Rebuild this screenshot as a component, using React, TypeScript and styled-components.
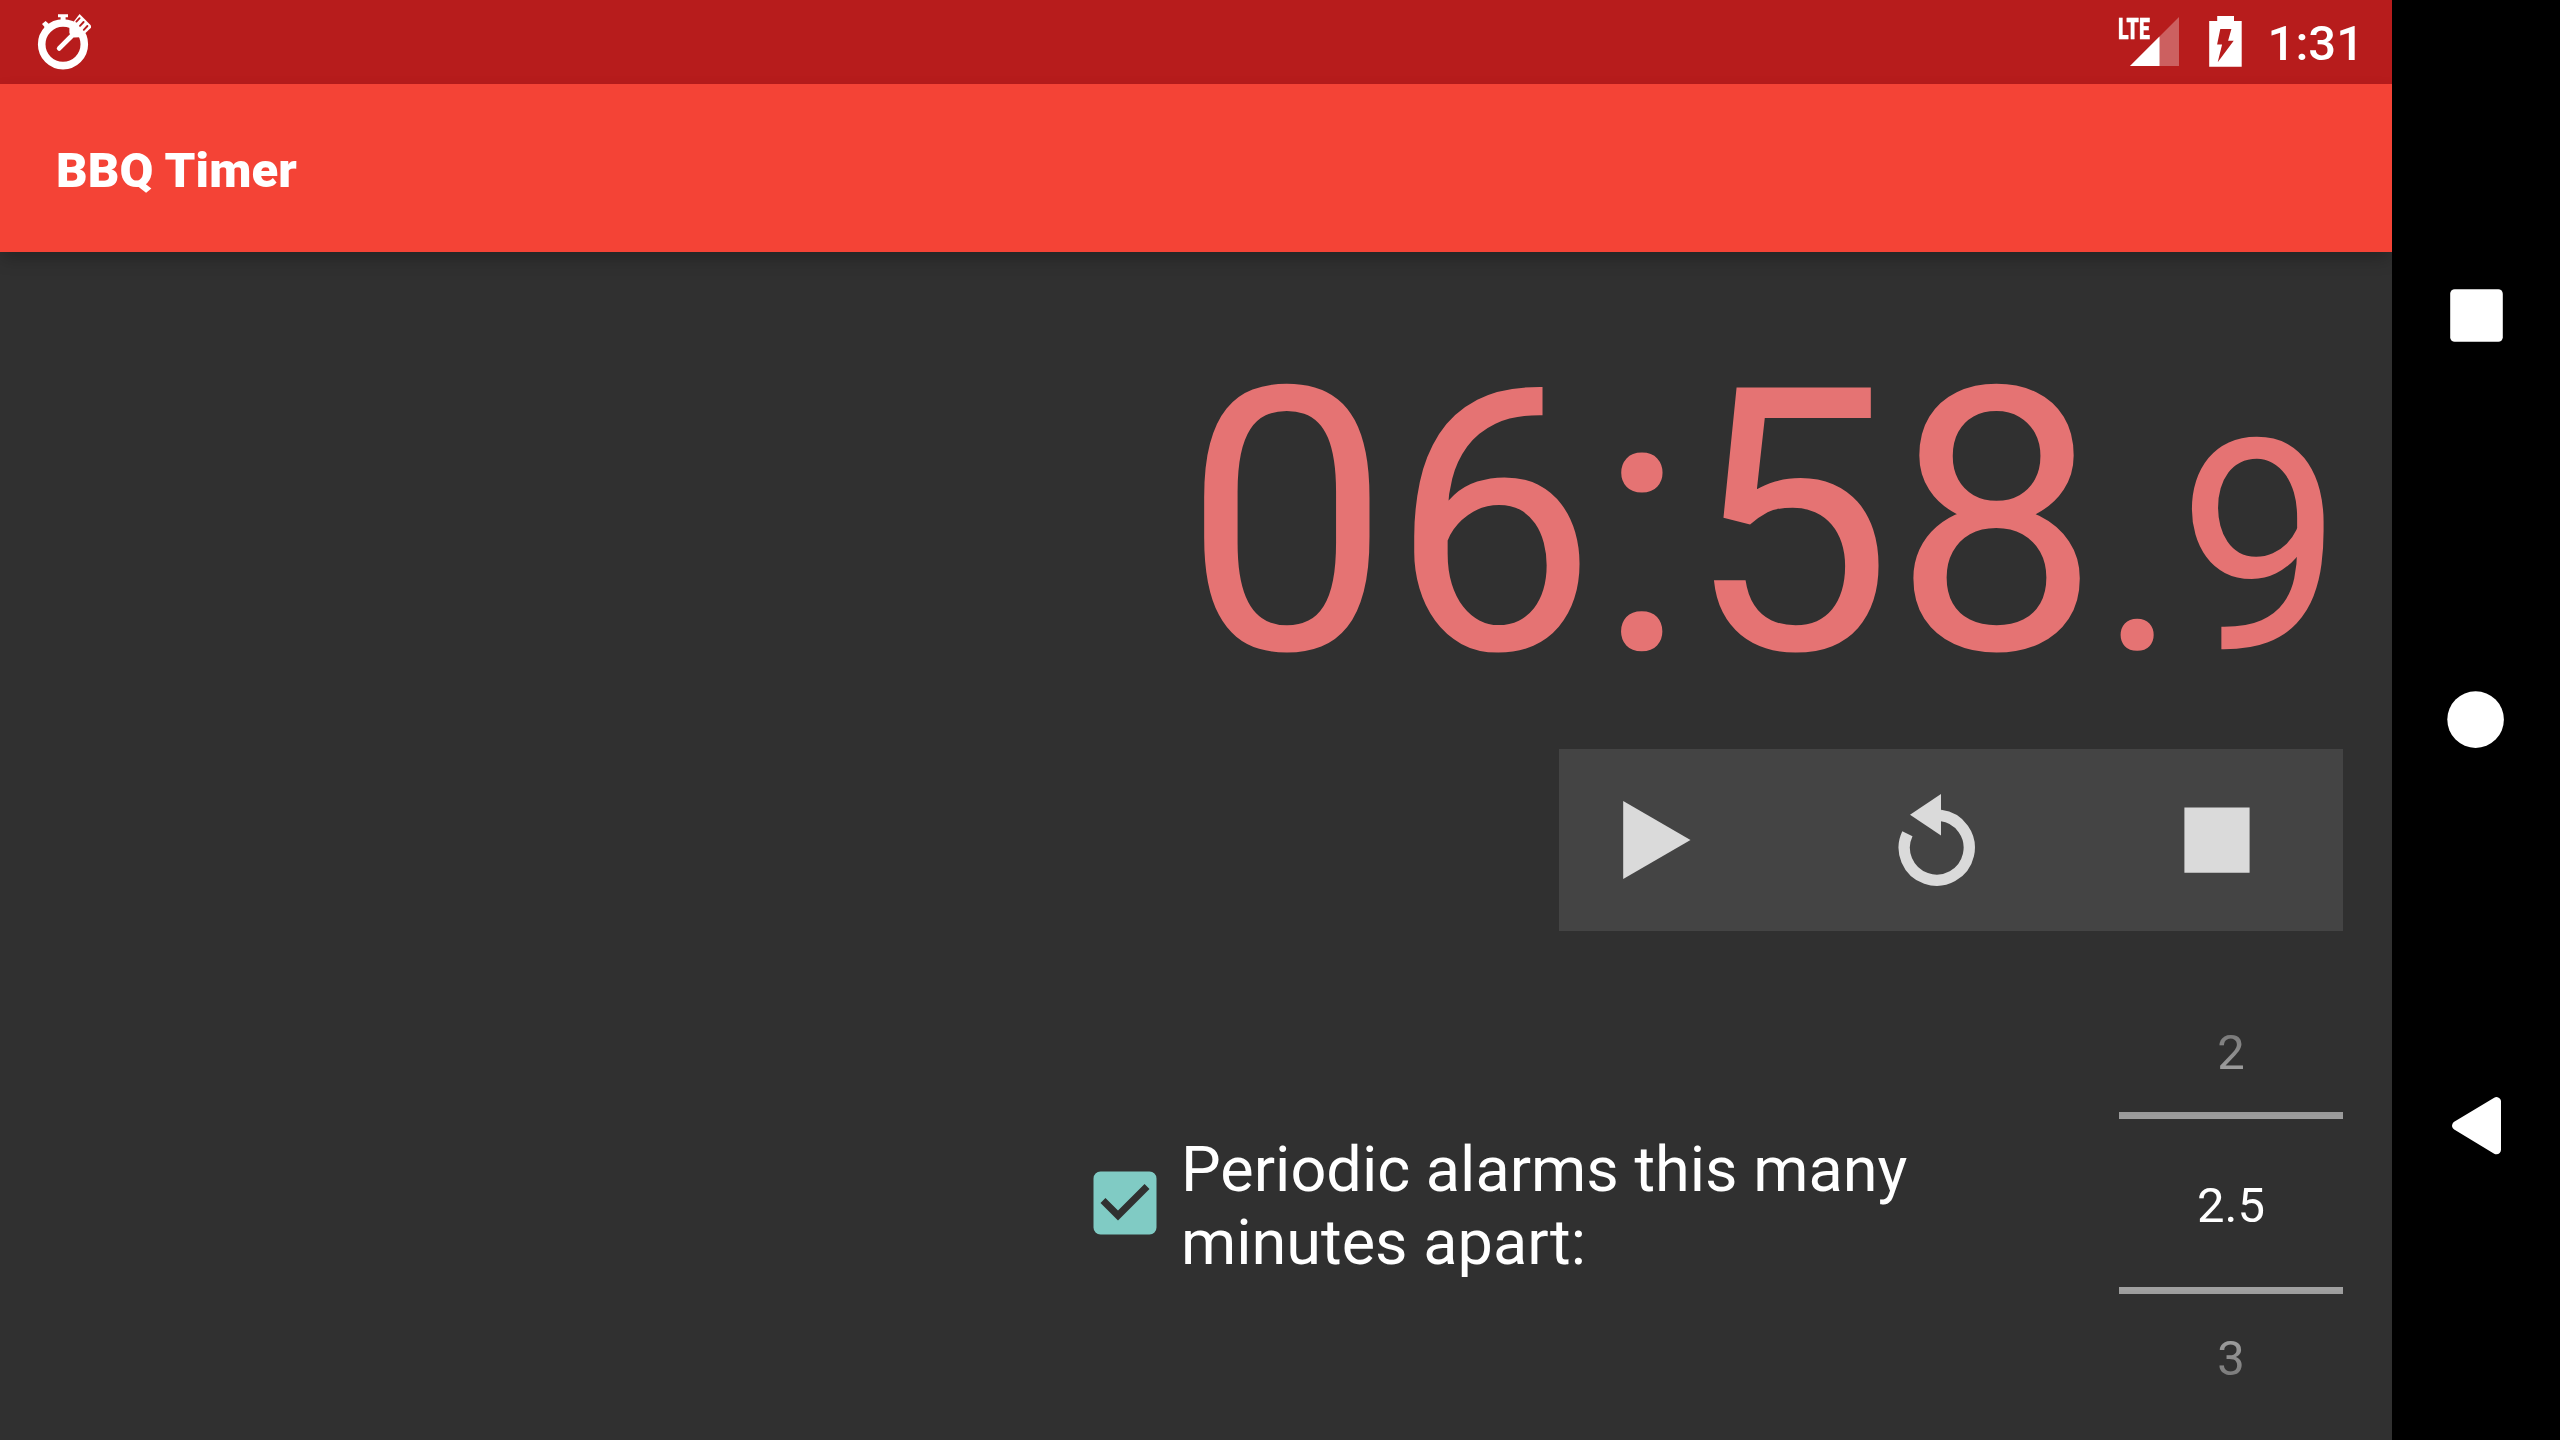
import React from "react";
import styled, { createGlobalStyle } from "styled-components";

const GlobalStyle = createGlobalStyle`
  *, *::before, *::after { box-sizing: border-box; }
  body { margin: 0; background: #000; }
`;

const Device = styled.div`
  display: grid;
  grid-template-columns: 2392px 168px;
  width: 2560px;
  height: 1440px;
  overflow: hidden;
  background: #000;
  font-family: Roboto, "Noto Sans", sans-serif;
  color: #fff;
`;

const AppWindow = styled.div`
  display: flex;
  flex-direction: column;
  height: 1440px;
  overflow: hidden;
  background: #303030;
`;

const StatusBar = styled.header`
  display: flex;
  justify-content: space-between;
  flex: 0 0 84px;
  height: 84px;
  padding: 0 28px 0 35px;
  background: #b71c1c;
`;

const StatusIcons = styled.div`
  display: flex;
  align-items: flex-start;
`;

const StatusGlyph = styled.svg<{ $width: number; $gap?: number }>`
  display: block;
  flex: none;
  width: ${(p) => p.$width}px;
  height: 84px;
  margin-right: ${(p) => p.$gap ?? 0}px;
`;

const NetworkType = styled.span`
  width: 12px;
  padding-top: 12px;
  font-size: 29.5px;
  line-height: 35px;
  font-weight: 900;
  white-space: nowrap;
  -webkit-text-stroke: 0.4px currentColor;
  transform: scaleX(0.66);
  transform-origin: 0 0;
`;

const StatusClock = styled.span`
  padding-top: 4px;
  font-size: 49px;
  line-height: 80px;
  font-weight: 500;
`;

const Toolbar = styled.div`
  display: flex;
  align-items: center;
  flex: 0 0 168px;
  padding: 4px 56px 0;
  background: #f44336;
  box-shadow: 0 8px 16px -2px rgba(0, 0, 0, 0.25);
`;

const Title = styled.h1`
  margin: 0;
  font-size: 49px;
  line-height: 57px;
  font-weight: 900;
  letter-spacing: 0.15px;
`;

const Content = styled.main`
  display: flex;
  flex-direction: column;
  align-items: flex-end;
  padding: 56px 49px 0 0;
`;

const Elapsed = styled.div`
  font-size: 368px;
  line-height: 431px;
  height: 431px;
  color: #e57373;
  white-space: nowrap;
`;

const Tenths = styled.span`
  font-size: 0.8em;
  line-height: 1;
`;

const Controls = styled.div`
  display: flex;
  align-items: center;
  justify-content: space-between;
  width: 784px;
  height: 182px;
  margin-top: 10px;
  padding: 0 78px 0 50px;
  background: #444;
`;

const ControlButton = styled.button`
  width: 96px;
  height: 96px;
  padding: 0;
  border: 0;
  background: none;
  color: #dadada;
`;

const Drawing = styled.svg`
  display: block;
  width: 100%;
  height: 100%;
`;

const Settings = styled.section`
  display: flex;
  align-items: center;
  width: 1260px;
  height: 459px;
  margin-top: 45px;
`;

const Checkbox = styled.button`
  flex: none;
  width: 84px;
  height: 84px;
  margin: 0 14px 5px 0;
  padding: 0;
  border: 0;
  background: none;
  color: #80cbc4;
`;

const Label = styled.label`
  flex: 1;
  padding: 1px 49px 0 0;
  font-size: 63px;
  line-height: 73px;
`;

const Picker = styled.div`
  display: grid;
  grid-template-rows: 136px 7px 168px 7px 141px;
  width: 224px;
  height: 459px;
  mask-image: linear-gradient(to bottom, transparent -18px, #000 195px, #000 264px, transparent 477px);
`;

const PickerDivider = styled.div`
  background: rgba(255, 255, 255, 0.7);
`;

const PickerValue = styled.div<{ $top?: number; $bottom?: number }>`
  display: flex;
  align-items: center;
  justify-content: center;
  padding-top: ${(p) => p.$top ?? 0}px;
  padding-bottom: ${(p) => p.$bottom ?? 0}px;
  font-size: 49px;
  line-height: 57px;
`;

const NavBar = styled.nav`
  display: flex;
  flex-direction: column;
  align-items: center;
  gap: 321px;
  padding-top: 273px;
`;

const NavButton = styled.button`
  flex: none;
  width: 84px;
  height: 84px;
  padding: 0;
  border: 0;
  background: none;
  color: #fff;
`;

const GrillTimerIcon = () => (
  <StatusGlyph $width={60} viewBox="35 0 60 84" fill="#fff" stroke="none">
    <circle cx="63" cy="44.3" r="21.3" fill="none" stroke="#fff" strokeWidth="7.6" />
    <path d="M58 14.3h10v2.9h-2.4V21h-5v-3.8H58z" />
    <path d="M42 24l3.6-3 3.4 3-.6 2.2-3.4 2.6-.8-2.4z" />
    <path d="M59.2 48.4L72.6 35" fill="none" stroke="#fff" strokeWidth="4.8" strokeLinecap="round" />
    <path d="M69.4 27.5L76 22l9.6 9.6-5.4 5.6-6.2.4-4.6-4.4z" />
    <path d="M79.6 14L91 25.4v2.4L85 33.6 73.4 22z" />
    <g stroke="#b71c1c" strokeWidth="1.9" strokeLinecap="round">
      <path d="M79.6 18.2L76.4 21.6" />
      <path d="M83.6 22L80 25.8" />
      <path d="M87.4 26L83.8 29.8" />
    </g>
  </StatusGlyph>
);

const SignalIcon = () => (
  <StatusGlyph $width={49} $gap={30} viewBox="2130 0 49 84">
    <path d="M2130 66L2179 17V66z" fill="#fff" fillOpacity="0.3" />
    <path d="M2130 66L2159.5 36.5V66z" fill="#fff" />
  </StatusGlyph>
);

const BatteryIcon = () => (
  <StatusGlyph $width={33} $gap={26} viewBox="2209 0 33 84">
    <path
      fill="#fff"
      fillRule="evenodd"
      d="M2217.2 16h16.8v5h7.7v45.8h-32.5V21h8zM2220.3 29l-3.2 15.6h5l-4.4 17.7 16-21.5h-5.6l3.3-11.8z"
    />
  </StatusGlyph>
);

export default function App() {
  return (
    <>
      <GlobalStyle />
      <Device>
        <AppWindow>
          <StatusBar>
            <StatusIcons>
              <GrillTimerIcon />
            </StatusIcons>
            <StatusIcons>
              <NetworkType>LTE</NetworkType>
              <SignalIcon />
              <BatteryIcon />
              <StatusClock>1:31</StatusClock>
            </StatusIcons>
          </StatusBar>
          <Toolbar>
            <Title>BBQ Timer</Title>
          </Toolbar>
          <Content>
            <Elapsed>
              06:58<Tenths>.9</Tenths>
            </Elapsed>
            <Controls>
              <ControlButton aria-label="Start">
                <Drawing viewBox="0 0 96 96" fill="currentColor">
                  <path d="M14.2 9L81.5 48 14.2 87z" />
                </Drawing>
              </ControlButton>
              <ControlButton aria-label="Reset">
                <Drawing viewBox="0 0 96 96" fill="currentColor">
                  <path d="M52 2v41.6L21 22.8z" />
                  <path
                    d="M51.5 23.4A32.5 32.5 0 1 1 18.4 41.7"
                    fill="none"
                    stroke="currentColor"
                    strokeWidth="11.3"
                  />
                </Drawing>
              </ControlButton>
              <ControlButton aria-label="Stop">
                <Drawing viewBox="0 0 96 96" fill="currentColor">
                  <path d="M15.4 15.6h65.2v65.2H15.4z" />
                </Drawing>
              </ControlButton>
            </Controls>
            <Settings>
              <Checkbox role="checkbox" aria-checked="true" aria-label="Periodic alarms">
                <Drawing viewBox="0 0 24 24" fill="currentColor">
                  <path d="M19 3H5a2 2 0 0 0-2 2v14a2 2 0 0 0 2 2h14a2 2 0 0 0 2-2V5a2 2 0 0 0-2-2zm-9 14l-5-5 1.41-1.41L10 14.17l7.59-7.59L19 8z" />
                </Drawing>
              </Checkbox>
              <Label>Periodic alarms this many minutes apart:</Label>
              <Picker>
                <PickerValue $top={17}>2</PickerValue>
                <PickerDivider />
                <PickerValue $top={4}>2.5</PickerValue>
                <PickerDivider />
                <PickerValue $bottom={12}>3</PickerValue>
              </Picker>
            </Settings>
          </Content>
        </AppWindow>
        <NavBar>
          <NavButton aria-label="Recent apps">
            <Drawing viewBox="0 0 84 84" fill="currentColor">
              <rect x="16.2" y="16.2" width="52.6" height="52.6" rx="4.5" />
            </Drawing>
          </NavButton>
          <NavButton aria-label="Home">
            <Drawing viewBox="0 0 84 84" fill="currentColor">
              <circle cx="41.6" cy="41.6" r="28.3" />
            </Drawing>
          </NavButton>
          <NavButton aria-label="Back">
            <Drawing viewBox="0 0 84 84" fill="currentColor" stroke="currentColor" strokeWidth="9" strokeLinejoin="round">
              <path d="M22.5 42.7L62.5 18.6V66.8z" />
            </Drawing>
          </NavButton>
        </NavBar>
      </Device>
    </>
  );
}
